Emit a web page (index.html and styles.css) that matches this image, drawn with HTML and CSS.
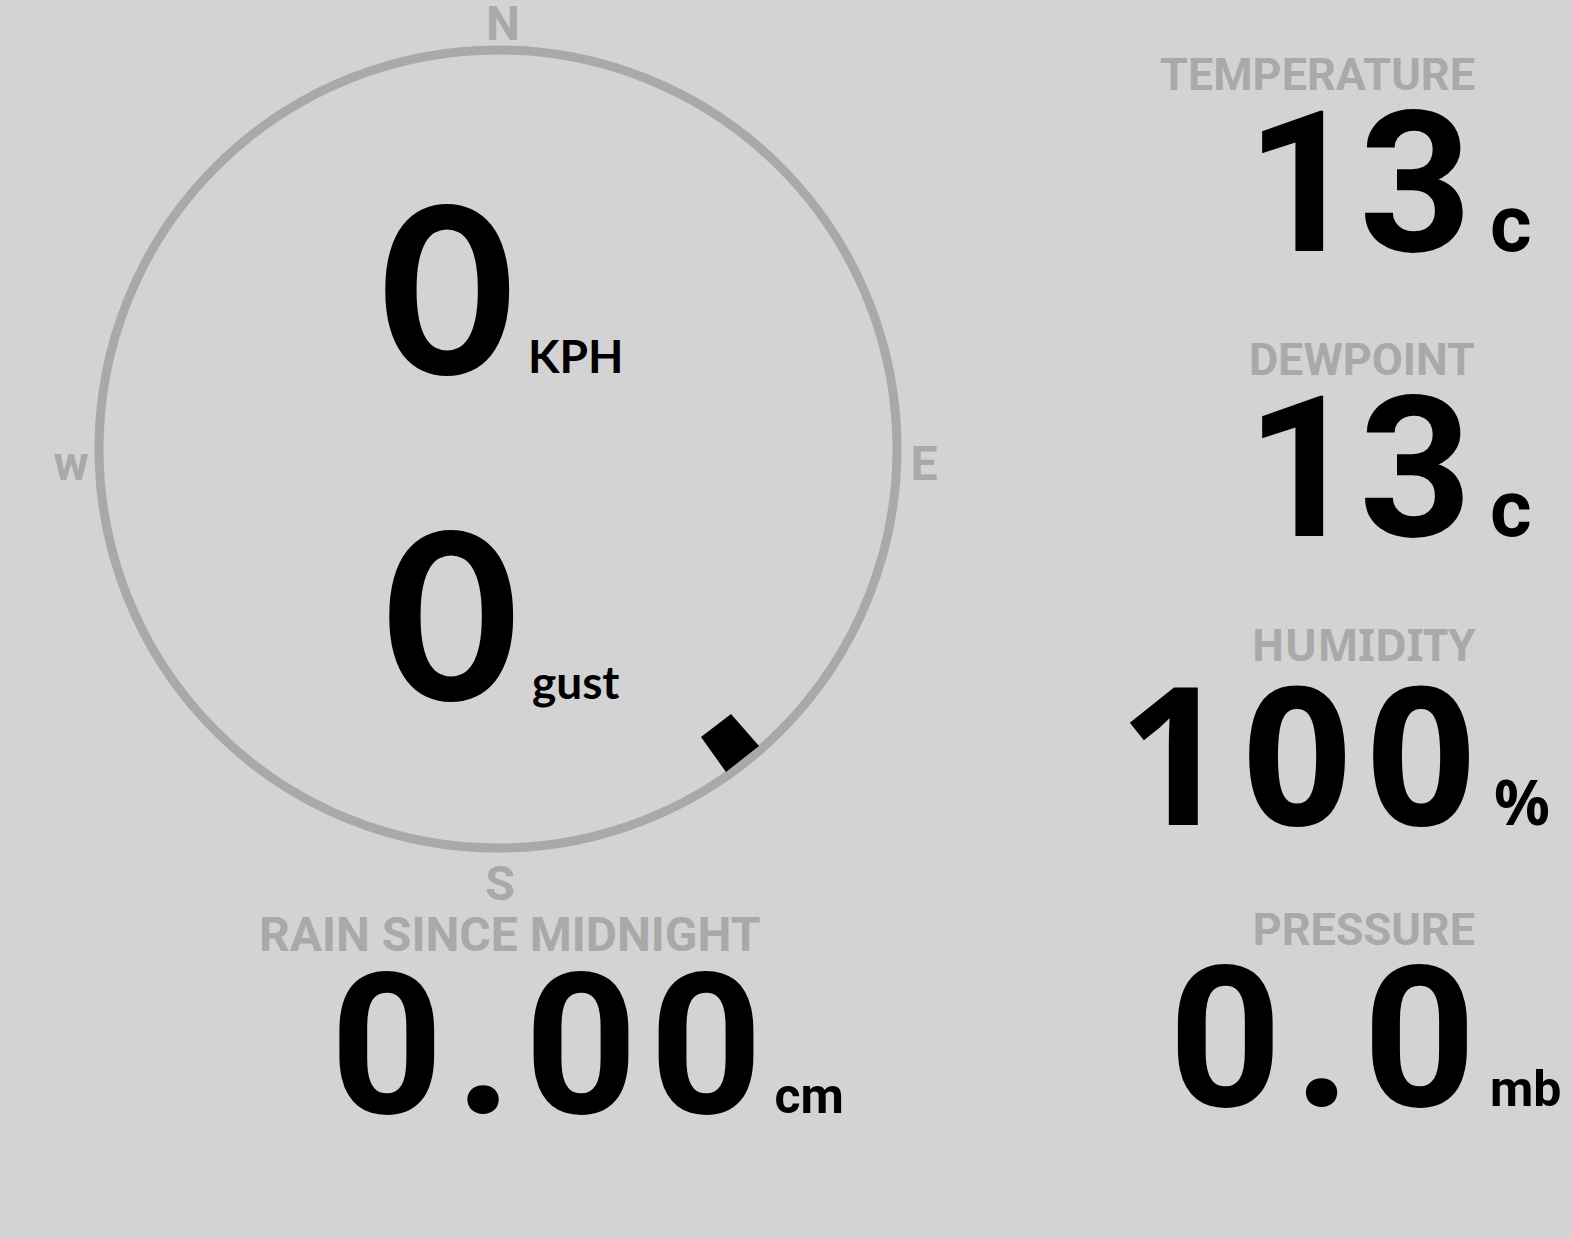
FILE: index.html
```html
<!DOCTYPE html>
<html lang="en">
<head>
<meta charset="UTF-8">
<meta name="viewport" content="width=device-width, initial-scale=1.0">
<title>Weather Station</title>
<link rel="stylesheet" href="styles.css">
</head>
<body>

<div class="dash">
  <section class="left">
    <div class="compass">
      <svg class="rose" width="1000" height="905" viewBox="0 0 1000 905">
        <circle cx="498" cy="449" r="399" fill="none" stroke="#a9a9a9" stroke-width="9"/>
        <text class="point" x="503" y="40">N</text>
        <text class="point" x="924" y="480">E</text>
        <text class="point" x="500" y="900">S</text>
        <text class="point" x="71" y="480">w</text>
        <polygon class="vane" points="731,714 759,746 726,772 701,737"/>
      </svg>
      <div class="wind">
        <div class="reading speed">
          <span class="wind-value" id="windSpeed">0</span>
          <span class="wind-unit">KPH</span>
        </div>
        <div class="reading gust">
          <span class="wind-value" id="windGust">0</span>
          <span class="wind-unit">gust</span>
        </div>
      </div>
    </div>

    <div class="stat rain">
      <div class="stat-label">RAIN SINCE MIDNIGHT</div>
      <div class="stat-value" id="rain">0.00</div>
      <div class="stat-unit unit-cm">cm</div>
    </div>
  </section>

  <section class="right">
    <div class="stat">
      <div class="stat-label">TEMPERATURE</div>
      <div class="stat-value" id="temperature">13</div>
      <div class="stat-unit unit-c">c</div>
    </div>
    <div class="stat">
      <div class="stat-label">DEWPOINT</div>
      <div class="stat-value" id="dewpoint">13</div>
      <div class="stat-unit unit-c">c</div>
    </div>
    <div class="stat humidity">
      <div class="stat-label">HUMIDITY</div>
      <div class="stat-value" id="humidity">100</div>
      <div class="stat-unit unit-pct">%</div>
    </div>
    <div class="stat pressure">
      <div class="stat-label">PRESSURE</div>
      <div class="stat-value" id="pressure">0.0</div>
      <div class="stat-unit unit-mb">mb</div>
    </div>
  </section>
</div>

</body>
</html>
```

FILE: styles.css
```css
body {
  margin: 0;
  padding: 0;
  background-color: #d3d3d3;
  font-family: Roboto, "Liberation Sans", sans-serif;
  font-weight: bold;
  color: #000;
  overflow: hidden;
}

.dash {
  display: flex;
  width: 1571px;
}

.left {
  width: 1000px;
  flex: none;
}

.right {
  flex: 1;
  padding-top: 52px;
}

/* compass */

.compass {
  position: relative;
  width: 1000px;
  height: 905px;
}

.rose {
  display: block;
}

.point {
  font-family: Roboto, sans-serif;
  font-weight: bold;
  font-size: 48px;
  fill: #a9a9a9;
  text-anchor: middle;
}

.vane {
  fill: #000;
}

.wind {
  position: absolute;
  top: 192px;
  left: 0;
  width: 1000px;
  display: flex;
  flex-direction: column;
  align-items: center;
  gap: 135px;
}

.reading {
  display: flex;
  align-items: baseline;
  gap: 14px;
  margin-left: 4px;
}

.wind-value {
  font-family: Lato, sans-serif;
  font-weight: bold;
  font-size: 230px;
  line-height: 0.8;
  -webkit-text-stroke: 2px #000;
}

.wind-unit {
  font-family: Lato, sans-serif;
  font-weight: bold;
  font-size: 46px;
}

/* readings */

.stat {
  display: grid;
  grid-template-columns: 1fr 81px;
  align-content: start;
  height: 285px;
}

.stat-label {
  grid-column: 1;
  padding-right: 15px;
  margin-bottom: 8px;
  text-align: right;
  font-size: 45px;
  line-height: 1;
  color: #a9a9a9;
}

.stat-value {
  grid-column: 1;
  grid-row: 2;
  align-self: baseline;
  padding-right: 18px;
  text-align: right;
  font-size: 197px;
  line-height: 0.8;
}

.stat-unit {
  grid-column: 2;
  grid-row: 2;
  align-self: baseline;
  line-height: 1;
}

.unit-c {
  font-size: 80px;
}

.unit-mb {
  font-size: 50px;
}

.unit-cm {
  font-size: 50px;
}

.pressure .stat-value {
  letter-spacing: 12px;
  padding-right: 2px;
}

.humidity .stat-label,
.humidity .stat-value,
.unit-pct {
  font-family: "Noto Sans", sans-serif;
  font-weight: 700;
}

.humidity .stat-label {
  font-size: 44px;
  letter-spacing: -0.5px;
}

.humidity .stat-value {
  font-size: 192px;
  letter-spacing: 14px;
  padding-right: 0;
}

.unit-pct {
  font-size: 62px;
  padding-left: 4px;
}

.rain {
  grid-template-columns: auto auto;
  justify-content: start;
  height: auto;
  margin-left: 259px;
  margin-top: 6px;
}

.rain .stat-label {
  padding-right: 4px;
  font-size: 48px;
}

.rain .stat-value {
  padding-right: 0;
  margin-right: -10px;
  letter-spacing: 12px;
}

.rain .stat-unit {
  padding-left: 10px;
}
```
